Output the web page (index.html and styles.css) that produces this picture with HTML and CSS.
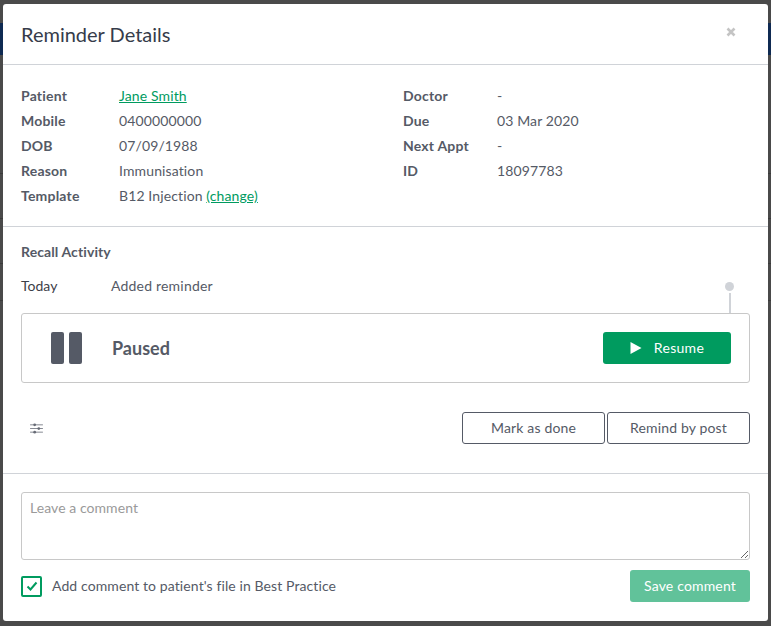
FILE: index.html
```html
<!DOCTYPE html>
<html lang="en">
<head>
<meta charset="utf-8">
<title>Reminder Details</title>
<link rel="stylesheet" href="styles.css">
</head>
<body>
<div class="backdrop-nav"></div>
<div class="backdrop-rows"></div>
<div class="modal">
  <header class="modal-head">
    <h1>Reminder Details</h1>
    <svg class="close" viewBox="0 0 10 10" width="10" height="10"><path d="M1.500 1.500l7 7M8.500 1.500l-7 7"/></svg>
  </header>
  <section class="details">
    <dl class="col col-left">
      <dt>Patient</dt><dd><a href="#">Jane Smith</a></dd>
      <dt>Mobile</dt><dd>0400000000</dd>
      <dt>DOB</dt><dd>07/09/1988</dd>
      <dt>Reason</dt><dd>Immunisation</dd>
      <dt>Template</dt><dd>B12 Injection <a href="#">(change)</a></dd>
    </dl>
    <dl class="col col-right">
      <dt>Doctor</dt><dd>-</dd>
      <dt>Due</dt><dd>03 Mar 2020</dd>
      <dt>Next Appt</dt><dd>-</dd>
      <dt>ID</dt><dd>18097783</dd>
    </dl>
  </section>
  <section class="activity">
    <h2>Recall Activity</h2>
    <div class="log">
      <span class="log-date">Today</span>
      <span class="log-text">Added reminder</span>
      <span class="pin"></span>
    </div>
    <div class="status">
      <div class="pause"><i></i><i></i></div>
      <strong>Paused</strong>
      <button class="btn btn-green" type="button"><svg viewBox="0 0 12 12" width="12" height="12"><path d="M0.500 0L11.500 6L0.500 12Z"/></svg><span>Resume</span></button>
    </div>
    <div class="actions">
      <svg class="sliders" viewBox="0 0 14 12" width="13" height="11"><path d="M0 2h14M0 6h14M0 10h14"/><circle cx="5" cy="2" r="1.500"/><circle cx="9.500" cy="6" r="1.500"/><circle cx="5" cy="10" r="1.500"/></svg>
      <div class="action-btns">
        <button class="btn btn-outline btn-done" type="button">Mark as done</button>
        <button class="btn btn-outline btn-post" type="button">Remind by post</button>
      </div>
    </div>
  </section>
  <section class="comment">
    <textarea placeholder="Leave a comment"></textarea>
    <div class="comment-foot">
      <label class="check">
        <span class="box"><svg viewBox="0 0 12 12" width="12" height="12"><path d="M1.500 6.500L4.500 9.500L10.500 2.500"/></svg></span>
        <span class="check-text">Add comment to patient's file in Best Practice</span>
      </label>
      <button class="btn btn-save" type="button">Save comment</button>
    </div>
  </section>
</div>
</body>
</html>
```

FILE: styles.css
```css
* { box-sizing: border-box; }
html, body { height: 100%; }
body {
  margin: 0;
  padding: 4px 3px 5px;
  background: #4a4a4a;
  font-family: Lato, sans-serif;
  font-size: 14px;
  letter-spacing: 0.12px;
  color: #555a66;
  overflow: hidden;
  position: relative;
}
.backdrop-nav {
  position: absolute;
  left: 0;
  right: 0;
  top: 23px;
  height: 32px;
  background: #0f2a52;
}
.backdrop-rows {
  position: absolute;
  left: 0;
  right: 0;
  top: 173px;
  height: 128px;
  background-image:
    linear-gradient(#3b3b3b, #3b3b3b),
    linear-gradient(#3b3b3b, #3b3b3b),
    linear-gradient(#3b3b3b, #3b3b3b),
    linear-gradient(#3b3b3b, #3b3b3b);
  background-size: 100% 1px;
  background-position: 0 0, 0 45px, 0 90px, 0 127px;
  background-repeat: no-repeat;
}
.modal {
  position: relative;
  width: 765px;
  height: 617px;
  background: #fff;
  border-radius: 3px;
}
.modal-head {
  height: 61px;
  border-bottom: 1px solid #d0d3d8;
  padding: 0 18px;
  display: flex;
  align-items: center;
  justify-content: space-between;
}
.modal-head h1 {
  margin: 0;
  font-size: 20px;
  font-weight: 400;
  letter-spacing: 0;
  color: #363c4a;
}
.close { margin-right: 14px; margin-top: -4px; }
.close path { stroke: #c4c4c4; stroke-width: 2.600; fill: none; }
.details {
  height: 162px;
  border-bottom: 1px solid #d0d3d8;
  padding: 18px 18px 0;
  display: flex;
}
.col {
  margin: 0;
  display: grid;
  grid-auto-rows: 25px;
  align-items: center;
  align-content: start;
}
.col-left { width: 382px; grid-template-columns: 98px 1fr; }
.col-right { grid-template-columns: 94px 1fr; }
.col dt { font-weight: 700; color: #555a66; letter-spacing: 0.2px; }
.col dd { margin: 0; }
a { color: #009b5f; }
.activity { height: 247px; border-bottom: 1px solid #d0d3d8; padding: 0 18px; }
.activity h2 {
  margin: 0;
  padding-top: 16px;
  font-size: 14px;
  line-height: 17px;
  font-weight: 700;
  letter-spacing: 0.1px;
}
.log {
  height: 17px;
  margin-top: 17px;
  display: flex;
  align-items: center;
  position: relative;
}
.log-date { width: 90px; color: #3c4048; letter-spacing: 0; }
.log-text { letter-spacing: 0.2px; }
.pin {
  position: absolute;
  right: 16px;
  top: 5px;
  width: 9px;
  height: 9px;
  border-radius: 50%;
  background: #d0d3d8;
}
.pin::after {
  content: "";
  position: absolute;
  left: 4px;
  top: 11px;
  width: 2px;
  height: 20px;
  background: #d0d3d8;
}
.status {
  margin-top: 19px;
  height: 70px;
  border: 1px solid #c8c8c8;
  border-radius: 3px;
  display: flex;
  align-items: center;
  padding: 0 18px 0 29px;
}
.pause { display: flex; gap: 5px; }
.pause i {
  width: 13px;
  height: 32px;
  border-radius: 2px;
  background: #555a66;
}
.status strong { margin-left: 30px; font-size: 18px; font-weight: 700; flex: 1; letter-spacing: 0; }
.btn {
  font-family: inherit;
  font-size: 14px;
  letter-spacing: 0.16px;
  border-radius: 3px;
  cursor: pointer;
}
.btn-green {
  width: 128px;
  height: 32px;
  border: 0;
  background: #009b5f;
  color: #fff;
  display: flex;
  align-items: center;
  justify-content: center;
  gap: 12px;
  padding: 0;
  letter-spacing: 0.3px;
}
.btn-green span { margin-top: -2px; }
.btn-green path { fill: #fff; }
.actions {
  margin-top: 29px;
  display: flex;
  align-items: center;
  justify-content: space-between;
  height: 32px;
}
.sliders { margin-left: 9px; }
.sliders path { stroke: #7b7f89; stroke-width: 1; fill: none; }
.sliders circle { fill: #666a75; }
.action-btns { display: flex; gap: 2px; }
.btn-outline {
  height: 32px;
  background: #fff;
  border: 1px solid #555a66;
  color: #555a66;
  padding: 0 0 2px;
}
.btn-done { width: 143px; }
.btn-post { width: 143px; }
.comment { padding: 18px 18px 0; }
.comment textarea {
  display: block;
  width: 729px;
  height: 68px;
  border: 1px solid #c8c8c8;
  border-radius: 3px;
  padding: 6px 8px;
  font-family: inherit;
  font-size: 14px;
  letter-spacing: 0.06px;
  color: #555a66;
  outline: none;
  resize: vertical;
}
.comment textarea::placeholder { color: #9a9a9a; opacity: 1; }
.comment-foot {
  margin-top: 10px;
  display: flex;
  align-items: center;
  justify-content: space-between;
}
.check { display: flex; align-items: center; gap: 10px; letter-spacing: 0.1px; }
.check-text { margin-top: -2px; }
.box {
  width: 21px;
  height: 21px;
  border: 2px solid #009b5f;
  border-radius: 2px;
  display: flex;
  align-items: center;
  justify-content: center;
}
.box path { stroke: #009b5f; stroke-width: 2; fill: none; }
.btn-save {
  width: 120px;
  height: 32px;
  border: 0;
  background: #61c29a;
  color: #fff;
  padding: 0 0 2px;
}
```
